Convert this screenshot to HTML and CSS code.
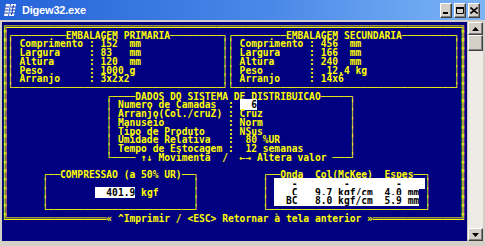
FILE: index.html
```html
<!doctype html>
<html lang="pt">
    <head>
        <meta charset="UTF-8" />
        <title>Digew32.exe</title>
        <link rel="stylesheet" href="styles.css">
    </head>
    <body>
        <div class="window">
            <div class="titlebar">
                <svg class="app-icon" viewBox="0 0 13 12" width="13" height="12">
                    <path d="M2 0h4l-2 12H0z" fill="#ffffff" />
                    <path d="M7 0h5l-2 12H5z" fill="#ffffff" />
                    <path d="M1 3h4M0.6 6h4M0.2 9h4" stroke="#1838b0" stroke-width="1.2" />
                    <path d="M6.6 3h5M6.2 6h5M5.8 9h5" stroke="#1838b0" stroke-width="1.2" />
                    <path d="M9.5 1l-2 10" stroke="#1838b0" stroke-width="1" />
                </svg>
                <span class="title">Digew32.exe</span>
                <div class="title-buttons">
                    <span class="tbtn">
                        <svg viewBox="0 0 8 7" width="8" height="7"><rect x="1" y="5" width="5" height="2" fill="#000" /></svg>
                    </span>
                    <span class="tbtn">
                        <svg viewBox="0 0 8 7" width="8" height="7"><path d="M0.5 1.5h7v5h-7z" fill="none" stroke="#000" /><rect x="0" y="0" width="8" height="2" fill="#000" /></svg>
                    </span>
                    <span class="tbtn">
                        <svg viewBox="0 0 8 7" width="8" height="7"><path d="M0.5 0.5l7 6M7.5 0.5l-7 6" stroke="#000" stroke-width="1.6" /></svg>
                    </span>
                </div>
            </div>

            <div class="client">
<pre class="console">
╔══════════════════════════════════════════════════════════════════════════════╗
║┌─────────EMBALAGEM PRIMARIA─────────┐┌─────────EMBALAGEM SECUNDARIA─────────┐║
║│ Comprimento : 152  mm              ││ Comprimento : 456  mm                │║
║│ Largura     : 83   mm              ││ Largura     : 166  mm                │║
║│ Altura      : 120  mm              ││ Altura      : 240  mm                │║
║│ Peso        : 1000 g               ││ Peso        :  12.4 kg               │║
║│ Arranjo     : 3x2x2                ││ Arranjo     : 14x6                   │║
║└────────────────────────────────────┘└──────────────────────────────────────┘║
║                 ┌────DADOS DO SISTEMA DE DISTRIBUICAO─────┐                  ║
║                 │ Numero de Camadas  : <span class="field">  6</span>                │                  ║
║                 │ Arranjo(Col./cruZ) : Cruz               │                  ║
║                 │ Manuseio           : Norm               │                  ║
║                 │ Tipo de Produto    : NSus               │                  ║
║                 │ Umidade Relativa   :  80 %UR            │                  ║
║                 │ Tempo de Estocagem :  12 semanas        │                  ║
║                 └──── ↑↓ Movimenta  /  ←→ Altera valor ───┘                  ║
║                                                                              ║
║      ┌──COMPRESSAO (a 50% UR)──┐           ┌──Onda  Col(McKee)  Espes──┐     ║
║      │                         │           │ <span class="field">   -        -        -    </span>│     ║
║      │        <span class="field">  401.9</span> kgf      │           │ <span class="field">   C   9.7 kgf/cm  4.0 mm</span> │     ║
║      │                         │           │ <span class="field">  BC   8.0 kgf/cm  5.9 mm</span> │     ║
║      └─────────────────────────┘           └───────────────────────────┘     ║
╚═════════════════« ^Imprimir / &lt;ESC&gt; Retornar à tela anterior »═══════════════╝
</pre>
                <div class="scrollbar">
                    <div class="sb-btn">
                        <svg viewBox="0 0 7 4" width="7" height="4"><path d="M3.5 0L7 4H0z" fill="#000" /></svg>
                    </div>
                    <div class="sb-thumb"></div>
                    <div class="sb-track"></div>
                    <div class="sb-btn">
                        <svg viewBox="0 0 7 4" width="7" height="4"><path d="M0 0h7L3.5 4z" fill="#000" /></svg>
                    </div>
                </div>
            </div>
        </div>
    </body>
</html>
```

FILE: styles.css
```css
* {
    margin: 0;
    padding: 0;
    box-sizing: border-box;
}

body {
    font-family: "Liberation Sans", Arial, sans-serif;
    background: #d4d0c8;
}

.window {
    width: 485px;
    height: 246px;
    display: flex;
    flex-direction: column;
    background: #d4d0c8;
    overflow: hidden;
}

/* title bar */

.titlebar {
    height: 20px;
    display: flex;
    align-items: center;
    padding: 0 5px 0 4px;
    background: linear-gradient(to right, #2462d8 0%, #4a88e8 55%, #7cb4f6 100%);
    color: white;
}

.app-icon {
    margin-right: 5px;
}

.title {
    flex: 1;
    font-size: 11px;
    font-weight: bold;
    letter-spacing: -0.2px;
}

.title-buttons {
    display: flex;
    gap: 2px;
}

.tbtn {
    width: 12px;
    height: 15px;
    display: flex;
    align-items: center;
    justify-content: center;
    background: #d4d0c8;
    border: 1px solid;
    border-color: #ffffff #404040 #404040 #ffffff;
    box-shadow: inset -1px -1px #808080;
}

/* console area */

.client {
    flex: 1;
    display: flex;
    padding: 2px 2px 5px 2px;
}

.console {
    width: 465px;
    height: 219px;
    padding-top: 1px;
    background: #000080;
    color: #ffff00;
    font-family: "DejaVu Sans Mono", "Liberation Mono", monospace;
    font-weight: bold;
    font-size: 9.63px;
    line-height: 8.72px;
    white-space: pre;
    overflow: hidden;
}

.field {
    background: white;
    color: black;
}

/* scroll bar */

.scrollbar {
    width: 16px;
    display: flex;
    flex-direction: column;
    background: #ecebe6;
    border-left: 1px solid #c8c6be;
}

.sb-btn,
.sb-thumb {
    display: flex;
    align-items: center;
    justify-content: center;
    background: #d4d0c8;
    border: 1px solid;
    border-color: #ffffff #404040 #404040 #ffffff;
    box-shadow: inset -1px -1px #808080;
}

.sb-btn {
    height: 13px;
}

.sb-thumb {
    height: 16px;
}

.sb-track {
    flex: 1;
}
```
